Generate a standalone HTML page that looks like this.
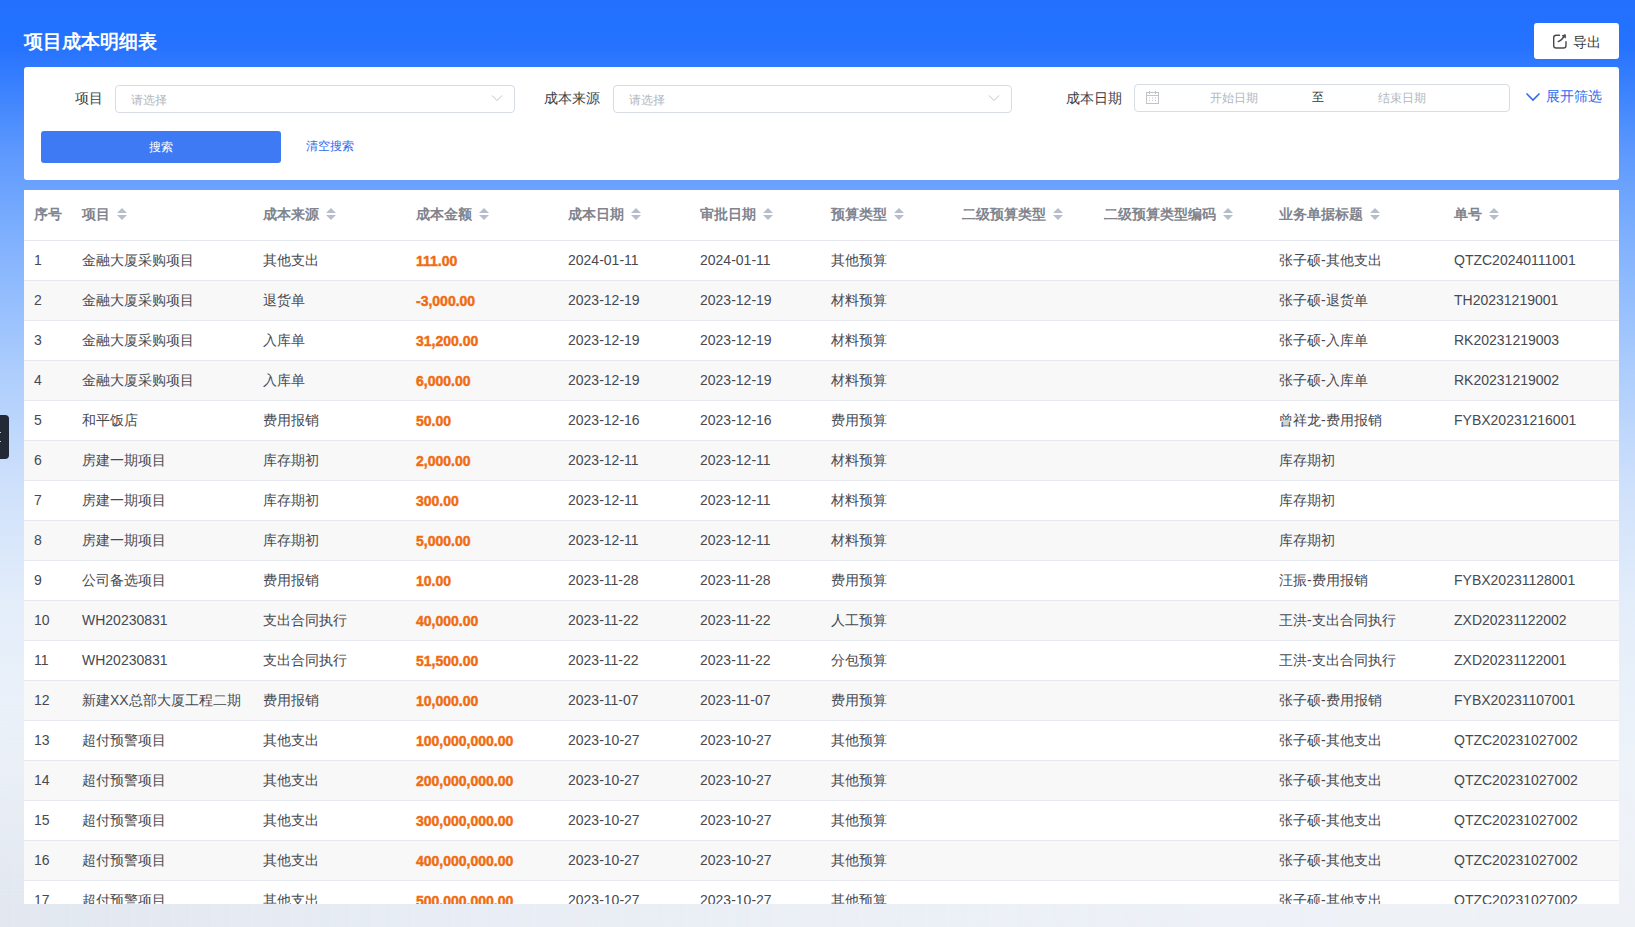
<!DOCTYPE html>
<html><head><meta charset="utf-8">
<style>
*{box-sizing:border-box;margin:0;padding:0}
html,body{width:1635px;height:927px;overflow:hidden}
body{font-family:"Liberation Sans",sans-serif;position:relative;
background:linear-gradient(180deg,#2370ff 0px,#2472ff 45px,#5c98fd 150px,#80b1fe 240px,#a9cbfd 360px,#cde0fb 480px,#e3edfa 600px,#eef3f9 760px,#edf1f7 927px);}
.title{position:absolute;left:24px;top:30px;font-size:19px;color:#fff;font-weight:bold;line-height:24px;letter-spacing:0px}
.export{position:absolute;left:1534px;top:23px;width:85px;height:36px;background:#fff;border-radius:3px;font-size:14px;color:#3a3a3a;line-height:35px}
.export span{position:absolute;left:39px;top:2px}
.export svg{position:absolute;left:18px;top:10px}
.filter{position:absolute;left:24px;top:67px;width:1595px;height:113px;background:#fff;border-radius:3px}
.lbl{position:absolute;font-size:14px;color:#3c3f45;line-height:20px;top:21px}
.sel{position:absolute;top:18px;height:28px;border:1px solid #d8dce5;border-radius:4px;background:#fff}
.ph{position:absolute;font-size:12px;color:#b3b6bd;line-height:16px;top:6px}
.chev{position:absolute;top:7px}
.btn{position:absolute;left:17px;top:64px;width:240px;height:32px;background:#3f7af5;border-radius:3px;color:#fff;font-size:12px;text-align:center;line-height:32px;font-weight:500}
.link{position:absolute;font-size:12px;color:#2f6bef;line-height:16px}
.tablecard{position:absolute;left:24px;top:190px;width:1595px;height:714px;background:#fff;overflow:hidden}
.hc{position:absolute;top:15px;font-size:14px;color:#80848e;font-weight:bold;line-height:18px;white-space:nowrap}
.sort{display:inline-block;position:relative;width:10px;height:12px;margin-left:7px;vertical-align:-1px}
.sort b{position:absolute;left:0;width:0;height:0;border-left:5px solid transparent;border-right:5px solid transparent}
.sort .up{top:0;border-bottom:5px solid #b6bdcb}
.sort .dn{top:7px;border-top:5px solid #b6bdcb}
.hline{position:absolute;left:0;top:50px;width:1595px;height:1px;background:#e4e7ef}
.row{position:absolute;left:0;width:1595px;height:40px;border-bottom:1px solid #e6e9f1;background:#fff}
.row.st{background:#f8f8f9}
.c{position:absolute;top:10px;font-size:14px;color:#46494f;line-height:18px;white-space:nowrap}
.amt{color:#f06c10;font-weight:bold;top:11px;-webkit-text-stroke:0.45px #f06c10}
.bgbot{position:absolute;left:0;top:700px;width:1635px;height:227px;background:linear-gradient(90deg,rgba(190,200,218,0.22) 0px,rgba(205,214,228,0.12) 500px,rgba(230,236,246,0.03) 1000px,rgba(255,255,255,0.1) 1635px);-webkit-mask-image:linear-gradient(180deg,transparent 0px,#000 200px)}
.sidetab{position:absolute;left:-1px;top:415px;width:10px;height:44px;background:#232936;border-radius:0 4px 4px 0}.sidetab i{position:absolute;left:1px;width:1px;height:1px;background:#c9ccd2}
</style></head><body>
<div class="bgbot"></div>
<div class="title">项目成本明细表</div>
<div class="export"><svg width="16" height="16" viewBox="0 0 16 16" fill="none" stroke="#4a4a4a" stroke-width="1.4" stroke-linecap="round"><path d="M7.5 2.2H4.3A2.6 2.6 0 0 0 1.7 4.8V12.4A2.6 2.6 0 0 0 4.3 15H11.4A2.6 2.6 0 0 0 14 12.4V8.6"/><path d="M6.2 8.6C9 7.8 10.6 6 12.2 3.2"/><path d="M10.4 2.6L13.3 1.6L13.6 4.6Z" fill="#4a4a4a" stroke-width="0.8" stroke-linejoin="round"/></svg><span>导出</span></div>
<div class="filter">
  <div class="lbl" style="left:51px">项目</div>
  <div class="sel" style="left:91px;width:400px"><div class="ph" style="left:15px">请选择</div><svg class="chev" style="left:375px" width="12" height="10" viewBox="0 0 12 10" fill="none" stroke="#bfc3cb" stroke-width="1"><path d="M1 2.5l5 5 5-5"/></svg></div>
  <div class="lbl" style="left:520px">成本来源</div>
  <div class="sel" style="left:589px;width:399px"><div class="ph" style="left:15px">请选择</div><svg class="chev" style="left:374px" width="12" height="10" viewBox="0 0 12 10" fill="none" stroke="#bfc3cb" stroke-width="1"><path d="M1 2.5l5 5 5-5"/></svg></div>
  <div class="lbl" style="left:1042px">成本日期</div>
  <div class="sel" style="left:1110px;width:376px;top:17px">
    <svg style="position:absolute;left:11px;top:6px" width="13" height="13" viewBox="0 0 13 13" fill="none" stroke="#c0c4cc" stroke-width="1"><rect x="0.5" y="1.5" width="12" height="11"/><path d="M0.5 4.5h12M3.5 0v3M9.5 0v3"/><path d="M3 7h1M6 7h1M9 7h1M3 9.5h1M6 9.5h1M9 9.5h1"/></svg>
    <div class="ph" style="left:75px;top:5px">开始日期</div>
    <div class="ph" style="left:177px;top:4px;color:#333;font-weight:500">至</div>
    <div class="ph" style="left:243px;top:5px">结束日期</div>
  </div>
  <svg style="position:absolute;left:1501px;top:24px" width="16" height="11" viewBox="0 0 16 11" fill="none" stroke="#2f6bef" stroke-width="1.6"><path d="M1.5 2.5l6.5 6.5 6.5-6.5"/></svg>
  <div class="link" style="left:1522px;top:20px;font-size:14px;line-height:18px">展开筛选</div>
  <div class="btn">搜索</div>
  <div class="link" style="left:282px;top:71px">清空搜索</div>
</div>
<div class="tablecard">
<div class="hc" style="left:10px">序号</div>
<div class="hc" style="left:58px">项目<i class="sort"><b class="up"></b><b class="dn"></b></i></div>
<div class="hc" style="left:239px">成本来源<i class="sort"><b class="up"></b><b class="dn"></b></i></div>
<div class="hc" style="left:392px">成本金额<i class="sort"><b class="up"></b><b class="dn"></b></i></div>
<div class="hc" style="left:544px">成本日期<i class="sort"><b class="up"></b><b class="dn"></b></i></div>
<div class="hc" style="left:676px">审批日期<i class="sort"><b class="up"></b><b class="dn"></b></i></div>
<div class="hc" style="left:807px">预算类型<i class="sort"><b class="up"></b><b class="dn"></b></i></div>
<div class="hc" style="left:938px">二级预算类型<i class="sort"><b class="up"></b><b class="dn"></b></i></div>
<div class="hc" style="left:1080px">二级预算类型编码<i class="sort"><b class="up"></b><b class="dn"></b></i></div>
<div class="hc" style="left:1255px">业务单据标题<i class="sort"><b class="up"></b><b class="dn"></b></i></div>
<div class="hc" style="left:1430px">单号<i class="sort"><b class="up"></b><b class="dn"></b></i></div>
<div class="hline"></div>
<div class="row" style="top:51px"><div class="c" style="left:10px">1</div><div class="c" style="left:58px">金融大厦采购项目</div><div class="c" style="left:239px">其他支出</div><div class="c amt" style="left:392px">111.00</div><div class="c" style="left:544px">2024-01-11</div><div class="c" style="left:676px">2024-01-11</div><div class="c" style="left:807px">其他预算</div><div class="c" style="left:1255px">张子硕-其他支出</div><div class="c" style="left:1430px">QTZC20240111001</div></div>
<div class="row st" style="top:91px"><div class="c" style="left:10px">2</div><div class="c" style="left:58px">金融大厦采购项目</div><div class="c" style="left:239px">退货单</div><div class="c amt" style="left:392px">-3,000.00</div><div class="c" style="left:544px">2023-12-19</div><div class="c" style="left:676px">2023-12-19</div><div class="c" style="left:807px">材料预算</div><div class="c" style="left:1255px">张子硕-退货单</div><div class="c" style="left:1430px">TH20231219001</div></div>
<div class="row" style="top:131px"><div class="c" style="left:10px">3</div><div class="c" style="left:58px">金融大厦采购项目</div><div class="c" style="left:239px">入库单</div><div class="c amt" style="left:392px">31,200.00</div><div class="c" style="left:544px">2023-12-19</div><div class="c" style="left:676px">2023-12-19</div><div class="c" style="left:807px">材料预算</div><div class="c" style="left:1255px">张子硕-入库单</div><div class="c" style="left:1430px">RK20231219003</div></div>
<div class="row st" style="top:171px"><div class="c" style="left:10px">4</div><div class="c" style="left:58px">金融大厦采购项目</div><div class="c" style="left:239px">入库单</div><div class="c amt" style="left:392px">6,000.00</div><div class="c" style="left:544px">2023-12-19</div><div class="c" style="left:676px">2023-12-19</div><div class="c" style="left:807px">材料预算</div><div class="c" style="left:1255px">张子硕-入库单</div><div class="c" style="left:1430px">RK20231219002</div></div>
<div class="row" style="top:211px"><div class="c" style="left:10px">5</div><div class="c" style="left:58px">和平饭店</div><div class="c" style="left:239px">费用报销</div><div class="c amt" style="left:392px">50.00</div><div class="c" style="left:544px">2023-12-16</div><div class="c" style="left:676px">2023-12-16</div><div class="c" style="left:807px">费用预算</div><div class="c" style="left:1255px">曾祥龙-费用报销</div><div class="c" style="left:1430px">FYBX20231216001</div></div>
<div class="row st" style="top:251px"><div class="c" style="left:10px">6</div><div class="c" style="left:58px">房建一期项目</div><div class="c" style="left:239px">库存期初</div><div class="c amt" style="left:392px">2,000.00</div><div class="c" style="left:544px">2023-12-11</div><div class="c" style="left:676px">2023-12-11</div><div class="c" style="left:807px">材料预算</div><div class="c" style="left:1255px">库存期初</div></div>
<div class="row" style="top:291px"><div class="c" style="left:10px">7</div><div class="c" style="left:58px">房建一期项目</div><div class="c" style="left:239px">库存期初</div><div class="c amt" style="left:392px">300.00</div><div class="c" style="left:544px">2023-12-11</div><div class="c" style="left:676px">2023-12-11</div><div class="c" style="left:807px">材料预算</div><div class="c" style="left:1255px">库存期初</div></div>
<div class="row st" style="top:331px"><div class="c" style="left:10px">8</div><div class="c" style="left:58px">房建一期项目</div><div class="c" style="left:239px">库存期初</div><div class="c amt" style="left:392px">5,000.00</div><div class="c" style="left:544px">2023-12-11</div><div class="c" style="left:676px">2023-12-11</div><div class="c" style="left:807px">材料预算</div><div class="c" style="left:1255px">库存期初</div></div>
<div class="row" style="top:371px"><div class="c" style="left:10px">9</div><div class="c" style="left:58px">公司备选项目</div><div class="c" style="left:239px">费用报销</div><div class="c amt" style="left:392px">10.00</div><div class="c" style="left:544px">2023-11-28</div><div class="c" style="left:676px">2023-11-28</div><div class="c" style="left:807px">费用预算</div><div class="c" style="left:1255px">汪振-费用报销</div><div class="c" style="left:1430px">FYBX20231128001</div></div>
<div class="row st" style="top:411px"><div class="c" style="left:10px">10</div><div class="c" style="left:58px">WH20230831</div><div class="c" style="left:239px">支出合同执行</div><div class="c amt" style="left:392px">40,000.00</div><div class="c" style="left:544px">2023-11-22</div><div class="c" style="left:676px">2023-11-22</div><div class="c" style="left:807px">人工预算</div><div class="c" style="left:1255px">王洪-支出合同执行</div><div class="c" style="left:1430px">ZXD20231122002</div></div>
<div class="row" style="top:451px"><div class="c" style="left:10px">11</div><div class="c" style="left:58px">WH20230831</div><div class="c" style="left:239px">支出合同执行</div><div class="c amt" style="left:392px">51,500.00</div><div class="c" style="left:544px">2023-11-22</div><div class="c" style="left:676px">2023-11-22</div><div class="c" style="left:807px">分包预算</div><div class="c" style="left:1255px">王洪-支出合同执行</div><div class="c" style="left:1430px">ZXD20231122001</div></div>
<div class="row st" style="top:491px"><div class="c" style="left:10px">12</div><div class="c" style="left:58px">新建XX总部大厦工程二期</div><div class="c" style="left:239px">费用报销</div><div class="c amt" style="left:392px">10,000.00</div><div class="c" style="left:544px">2023-11-07</div><div class="c" style="left:676px">2023-11-07</div><div class="c" style="left:807px">费用预算</div><div class="c" style="left:1255px">张子硕-费用报销</div><div class="c" style="left:1430px">FYBX20231107001</div></div>
<div class="row" style="top:531px"><div class="c" style="left:10px">13</div><div class="c" style="left:58px">超付预警项目</div><div class="c" style="left:239px">其他支出</div><div class="c amt" style="left:392px">100,000,000.00</div><div class="c" style="left:544px">2023-10-27</div><div class="c" style="left:676px">2023-10-27</div><div class="c" style="left:807px">其他预算</div><div class="c" style="left:1255px">张子硕-其他支出</div><div class="c" style="left:1430px">QTZC20231027002</div></div>
<div class="row st" style="top:571px"><div class="c" style="left:10px">14</div><div class="c" style="left:58px">超付预警项目</div><div class="c" style="left:239px">其他支出</div><div class="c amt" style="left:392px">200,000,000.00</div><div class="c" style="left:544px">2023-10-27</div><div class="c" style="left:676px">2023-10-27</div><div class="c" style="left:807px">其他预算</div><div class="c" style="left:1255px">张子硕-其他支出</div><div class="c" style="left:1430px">QTZC20231027002</div></div>
<div class="row" style="top:611px"><div class="c" style="left:10px">15</div><div class="c" style="left:58px">超付预警项目</div><div class="c" style="left:239px">其他支出</div><div class="c amt" style="left:392px">300,000,000.00</div><div class="c" style="left:544px">2023-10-27</div><div class="c" style="left:676px">2023-10-27</div><div class="c" style="left:807px">其他预算</div><div class="c" style="left:1255px">张子硕-其他支出</div><div class="c" style="left:1430px">QTZC20231027002</div></div>
<div class="row st" style="top:651px"><div class="c" style="left:10px">16</div><div class="c" style="left:58px">超付预警项目</div><div class="c" style="left:239px">其他支出</div><div class="c amt" style="left:392px">400,000,000.00</div><div class="c" style="left:544px">2023-10-27</div><div class="c" style="left:676px">2023-10-27</div><div class="c" style="left:807px">其他预算</div><div class="c" style="left:1255px">张子硕-其他支出</div><div class="c" style="left:1430px">QTZC20231027002</div></div>
<div class="row" style="top:691px"><div class="c" style="left:10px">17</div><div class="c" style="left:58px">超付预警项目</div><div class="c" style="left:239px">其他支出</div><div class="c amt" style="left:392px">500,000,000.00</div><div class="c" style="left:544px">2023-10-27</div><div class="c" style="left:676px">2023-10-27</div><div class="c" style="left:807px">其他预算</div><div class="c" style="left:1255px">张子硕-其他支出</div><div class="c" style="left:1430px">QTZC20231027002</div></div>
</div>
<div class="sidetab"><i style="top:17px"></i><i style="top:26px"></i></div>
</body></html>
